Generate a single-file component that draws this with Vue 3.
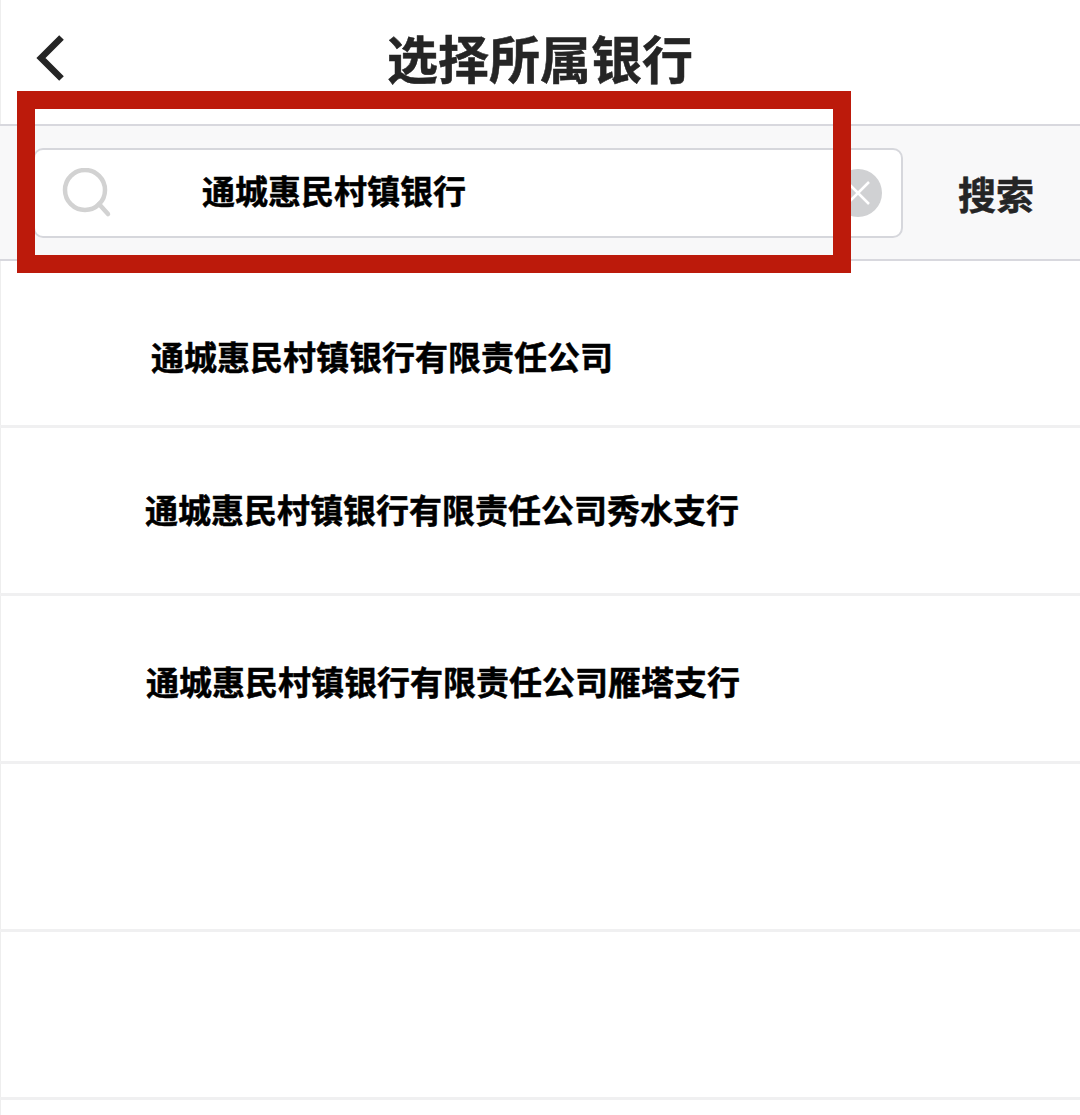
<script setup>
const rows = [
  { name: '通城惠民村镇银行有限责任公司', cls: 'r1' },
  { name: '通城惠民村镇银行有限责任公司秀水支行', cls: 'r2' },
  { name: '通城惠民村镇银行有限责任公司雁塔支行', cls: 'r3' },
  { name: '', cls: '' },
  { name: '', cls: '' },
]
</script>

<template>
  <div class="page">
    <header class="head">
      <svg class="back" width="32" height="48" viewBox="0 0 32 48">
        <path d="M27.5 3.5 L7 24 L27.5 44.5" fill="none" stroke="#252525" stroke-width="6.5" />
      </svg>
      <h1 class="title">选择所属银行</h1>
    </header>
    <div class="bar">
      <div class="input">
        <svg class="glass" width="50" height="50" viewBox="0 0 50 50">
          <circle cx="23" cy="22" r="20" fill="none" stroke="#d2d2d2" stroke-width="4.5" />
          <path d="M37 36 L46 46" fill="none" stroke="#d2d2d2" stroke-width="4.5" stroke-linecap="round" />
        </svg>
        <span class="query">通城惠民村镇银行</span>
        <svg class="clear" width="48" height="48" viewBox="0 0 48 48">
          <circle cx="24" cy="24" r="24" fill="#d0d1d3" />
          <path d="M13 13 L35 35 M35 13 L13 35" stroke="#fff" stroke-width="2.5" />
        </svg>
      </div>
      <span class="search">搜索</span>
    </div>
    <ul class="list">
      <li v-for="(r, i) in rows" :key="i" class="row" :class="r.cls">{{ r.name }}</li>
    </ul>
    <div class="mark"></div>
  </div>
</template>

<style scoped>
.page {
  position: relative;
  width: 1080px;
  height: 1115px;
  background: #fff;
  box-shadow: inset 1px 0 0 #eeeeee;
  overflow: hidden;
  font-family: "Liberation Sans", "Noto Sans CJK SC", sans-serif;
}
.head {
  height: 124px;
  box-sizing: border-box;
  position: relative;
  display: flex;
  justify-content: center;
  padding-top: 31px;
}
.back {
  position: absolute;
  left: 34px;
  top: 34px;
}
.title {
  margin: 0;
  font-size: 51px;
  line-height: 62px;
  font-weight: 700;
  color: #252525;
  -webkit-text-stroke: 0.5px #252525;
}
.bar {
  height: 137px;
  box-sizing: border-box;
  background: #f8f8f9;
  border-top: 2px solid #d8d8de;
  border-bottom: 2px solid #d8d8de;
  display: flex;
  align-items: flex-start;
  padding: 22px 0 0 33px;
}
.input {
  width: 870px;
  height: 90px;
  box-sizing: border-box;
  background: #fff;
  border: 2px solid #d6d7dc;
  border-radius: 10px;
  display: flex;
  align-items: center;
  padding: 0 19px 0 27px;
}
.query {
  margin-left: 90px;
  margin-bottom: 6px;
  font-size: 33px;
  font-weight: 700;
  color: #000;
  -webkit-text-stroke: 0.5px #000;
}
.clear {
  margin-left: auto;
}
.search {
  margin: 24px 0 0 55px;
  font-size: 38px;
  line-height: 48px;
  font-weight: 700;
  color: #252525;
  -webkit-text-stroke: 0.5px #252525;
}
.list {
  list-style: none;
  margin: 0;
  padding: 0;
}
.row {
  height: 168px;
  box-sizing: border-box;
  border-bottom: 3px solid #f0f0f1;
  display: flex;
  align-items: center;
  font-size: 33px;
  font-weight: 700;
  color: #000;
  -webkit-text-stroke: 0.5px #000;
}
.row:first-child {
  height: 167px;
}
.r1 {
  padding: 25px 0 0 151px;
}
.r2 {
  padding: 0 0 3px 145px;
}
.r3 {
  padding: 4px 0 0 146px;
}
.mark {
  position: absolute;
  left: 17px;
  top: 91px;
  width: 834px;
  height: 182px;
  box-sizing: border-box;
  border: 18px solid #bc1a0b;
}
</style>
